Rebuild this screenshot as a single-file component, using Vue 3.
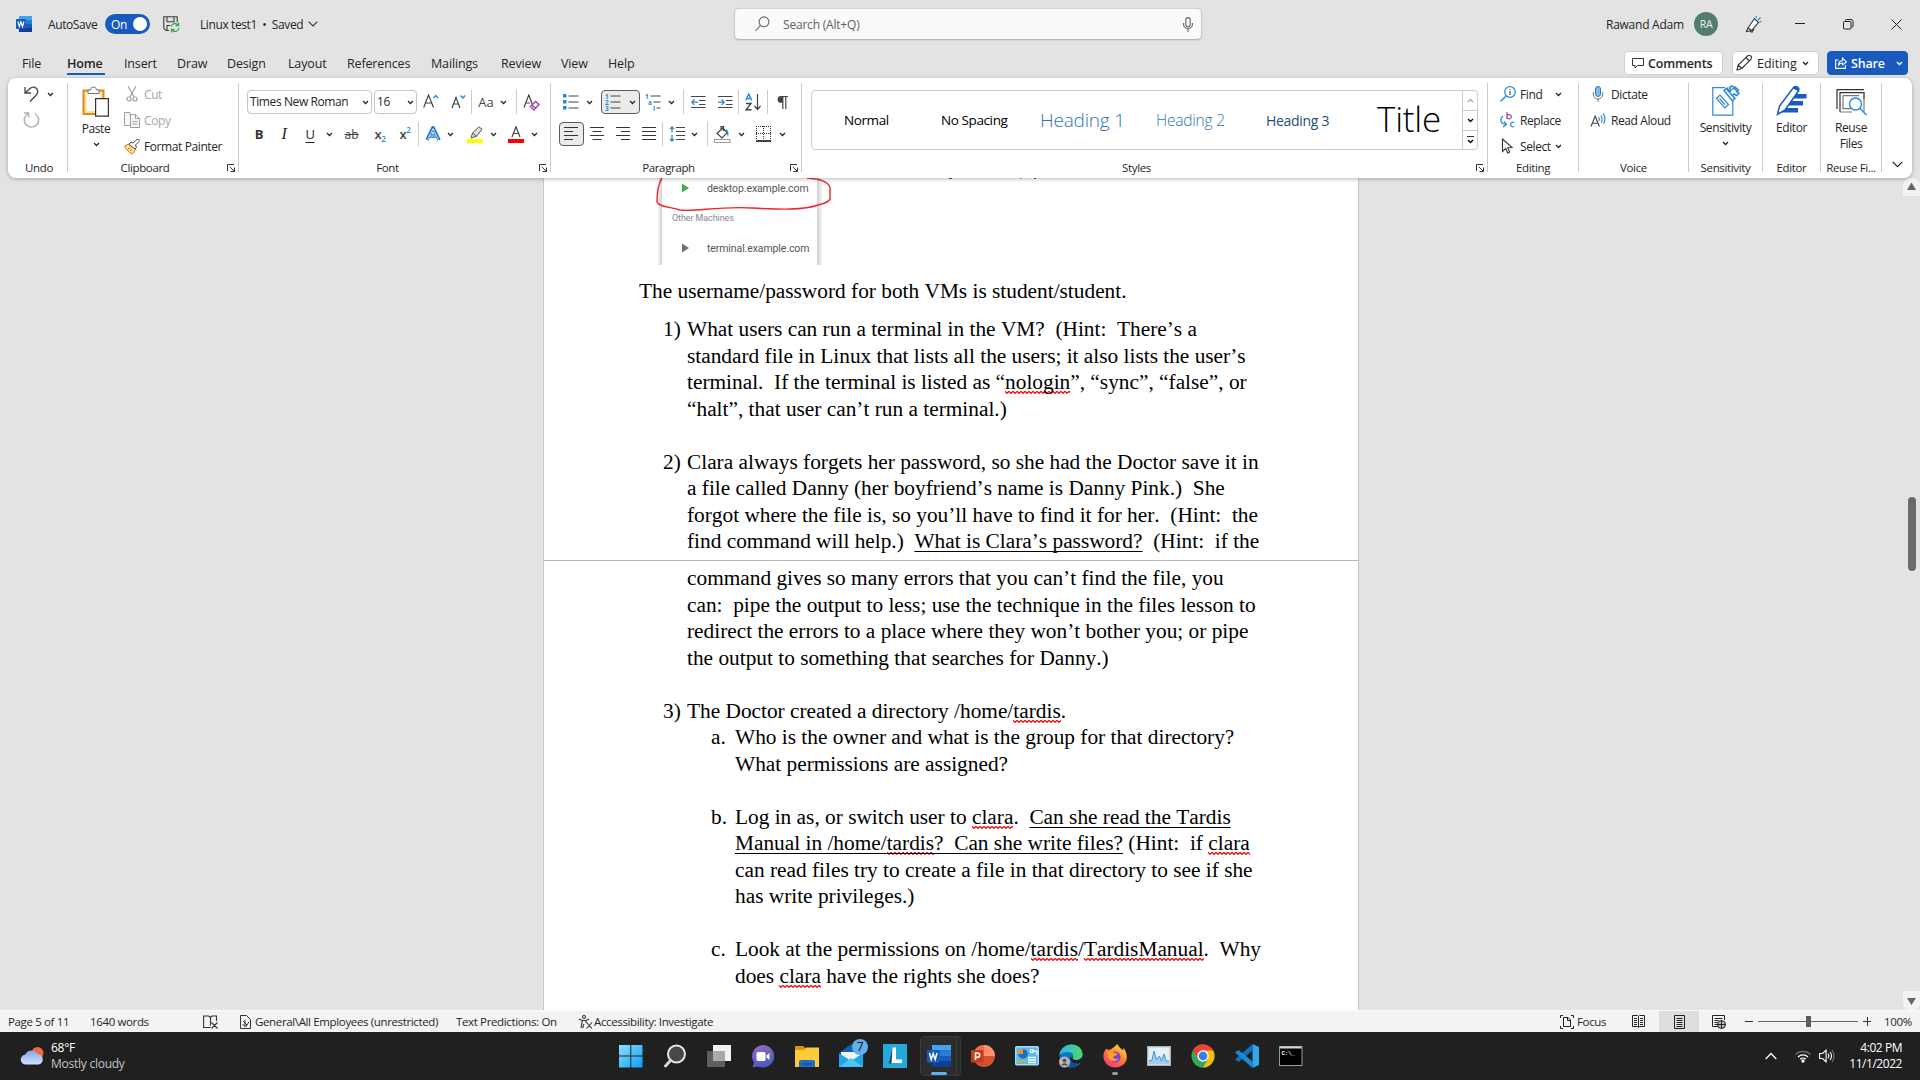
<template>
  <div class="app">
    <header class="titlebar">
      <svg class="word-logo" width="16" height="16" viewBox="0 0 16 16">
        <rect x="3" y="0" width="13" height="4" fill="#41a5ee" />
        <rect x="3" y="4" width="13" height="4" fill="#2b7cd3" />
        <rect x="3" y="8" width="13" height="4" fill="#185abd" />
        <rect x="3" y="12" width="13" height="4" fill="#103f91" />
        <rect x="0" y="3" width="10" height="10" rx="1" fill="#185abd" />
        <path d="M2 5.5l1.3 5 1.6-4.6 1.6 4.6 1.4-5" fill="none" stroke="#fff" stroke-width="1.2" />
      </svg>
      <span class="autosave">AutoSave</span>
      <div class="toggle"><span>On</span><i></i></div>
      <svg class="save-icon" width="17" height="17" viewBox="0 0 17 17" fill="none" stroke="#3b3b3b" stroke-width="1.1">
        <path d="M6 14.5H3L.8 12.300V.8h13.400V6M4 .8v5h7v-5M4 14V9.500h3" />
        <path d="M8 10.500a4 4 0 0 1 7-1.500M15.500 6.500v3h-3M16 12a4 4 0 0 1-7 2M8.500 16.500v-3h3" stroke="#3aa655" stroke-width="1.300" />
      </svg>
      <span class="doc-name">Linux test1 &nbsp;•&nbsp; Saved</span>
      <svg class="name-chev" width="10" height="6" viewBox="0 0 10 6"><path d="M.7.700L5 5 9.300.700" fill="none" stroke="#333" stroke-width="1.100" /></svg>

      <div class="search">
        <svg width="15" height="16" viewBox="0 0 15 16" fill="none" stroke="#666" stroke-width="1.100"><circle cx="9" cy="5.800" r="4.900" /><path d="M5.500 9.300L.5 15" /></svg>
        <span>Search (Alt+Q)</span>
        <svg class="mic" width="10" height="15" viewBox="0 0 10 15" fill="none" stroke="#666" stroke-width="1.100"><rect x="2.800" y=".6" width="4.400" height="9" rx="2.200" /><path d="M.6 6v1.500a4.400 4 0 0 0 8.800 0V6M5 11.600V15" /></svg>
      </div>

      <div class="account">
        <span class="user">Rawand Adam</span>
        <span class="avatar">RA</span>
        <svg class="pen-win" width="17" height="17" viewBox="0 0 17 17" fill="none" stroke="#333" stroke-width="1.100">
          <path d="M1.500 15.500L3 12 9.500 2.500l4 4-7 8zM4.500 14.800l2.500 1.400 2-3.200" fill="#fff" />
          <path d="M3.200 11.800l3.300 2.700" />
          <path d="M10.800 2l.8-1.800M13 4l2.500-2.500M14.300 6l2.300-.7" stroke="#2b88d8" />
        </svg>
        <svg class="win-min" width="10" height="10" viewBox="0 0 10 10"><path d="M0 4.500h10" stroke="#222" /></svg>
        <svg class="win-max" width="11" height="11" viewBox="0 0 11 11" fill="none" stroke="#222"><rect x=".5" y="2.500" width="7.500" height="7.500" rx="1" /><path d="M2.500 2V1.500a1 1 0 0 1 1-1H8A2 2 0 0 1 10 2.500V7a1 1 0 0 1-1 1H8.500" /></svg>
        <svg class="win-close" width="11" height="11" viewBox="0 0 11 11"><path d="M.5.500l10 10M10.500.500l-10 10" stroke="#222" /></svg>
      </div>
    </header>

    <nav class="tabs">
      <span v-for="tab in tabs" :key="tab" class="tab" :class="['tab-' + tab.toLowerCase(), { active: tab === 'Home' }]">{{ tab }}</span>
      <div class="tab-actions">
        <div class="pill comments">
          <svg width="12" height="11" viewBox="0 0 12 11" fill="none" stroke="#333"><path d="M.5.500h11v7H5.500L3 10V7.500H.5z" /></svg>
          <span>Comments</span>
        </div>
        <div class="pill editing">
          <svg width="16" height="16" viewBox="0 0 16 16" fill="none" stroke="#333" stroke-width="1.100"><path d="M1 15l1.200-5L11.500 1a2 2 0 0 1 3.300 3.300L5.800 13.500zM10 2.500l3.500 3.500M2.200 10l3.600 3.500" /></svg>
          <span>Editing</span>
          <Chev />
        </div>
        <div class="pill share">
          <svg width="12" height="12" viewBox="0 0 12 12" fill="none" stroke="#fff" stroke-width="1.100"><path d="M3.500 3H.6v8.400h9.800V8M3.500 8c0-3 1.500-4.300 4-4.300V1.200L11.400 5 7.500 8V6C5.500 6 4.500 6.500 3.500 8z" /></svg>
          <span>Share</span>
          <Chev />
        </div>
      </div>
    </nav>

    <section class="ribbon">
      <div class="group g-undo">
        <div class="undo-row">
          <svg width="16" height="17" viewBox="0 0 16 17" fill="none" stroke="#444" stroke-width="1.300"><path d="M1 1v6h6M1.200 6.800L6 2.500c3-2.600 7-1 7.600 2 .5 2-.3 3.700-2 5.300L6 15.500" /></svg>
          <Chev />
        </div>
        <svg class="redo" width="17" height="17" viewBox="0 0 17 17" fill="none" stroke="#b0b0b0" stroke-width="1.400"><path d="M1 1h4.500v4.500M5.200 1.500a7.200 7.200 0 1 0 6.500 0" /></svg>
        <div class="label">Undo</div>
      </div>

      <div class="group g-clip">
        <div class="clip-body">
          <div class="big-btn paste">
            <svg width="28" height="31" viewBox="0 0 28 31" fill="none">
              <path d="M1.500 4.500h20v23.500h-20z" fill="#fbdf9a" stroke="#e08a1e" stroke-width="2" />
              <path d="M4.500 7h14v18h-14z" fill="#fafafa" />
              <path d="M6 7.500V4h2.500a3 3 0 0 1 6 0H17v3.500z" fill="#fff" stroke="#777" />
              <path d="M13.600 12.600h12.800v17.500H13.600z" fill="#fff" stroke="#333" stroke-width="1.200" />
            </svg>
            <span>Paste</span>
            <Chev />
          </div>
          <div class="clip-list">
            <div class="row-item dim">
              <svg width="16" height="16" viewBox="0 0 16 16" fill="none" stroke="#a0a0a0" stroke-width="1.200"><path d="M4 0l6 11M12 0L6 11" /><circle cx="5" cy="13" r="2" /><circle cx="11" cy="13" r="2" /></svg>
              <span>Cut</span>
            </div>
            <div class="row-item dim">
              <svg width="16" height="16" viewBox="0 0 16 16" fill="#f6f6f6" stroke="#a0a0a0"><path d="M6 3.500V.5H.5v13H6" /><path d="M6.500 2.500h5l4 4v9h-9zM11.500 2.500v4h4M8.500 9.500h5M8.500 12h5" /></svg>
              <span>Copy</span>
            </div>
            <div class="row-item">
              <svg width="16" height="15" viewBox="0 0 16 15"><path d="M.6 7L6 4.500l6 5.500-3 4.500c-2 0-3-.5-3.500-1.500-2-1-3.500-3-4.900-6z" fill="#fbdf9a" stroke="#e0741e" /><path d="M5 5.500l2-2.500 2 1 4-3.500c2-1 3 .5 2 2L11.500 6l1 2.500-1.500 1.500z" fill="#fff" stroke="#444" /><path d="M4 10l2-1M6 12l2-2" stroke="#e0741e" /></svg>
              <span>Format Painter</span>
            </div>
          </div>
        </div>
        <div class="label">Clipboard</div>
        <Launcher />
      </div>

      <div class="group g-font">
        <div class="tool-row first">
          <div class="combo font-name"><span>Times New Roman</span><Chev /></div>
          <div class="combo font-size"><span>16</span><Chev /></div>
          <div class="cell w28">
            <svg width="16" height="16" viewBox="0 0 16 16" fill="none" stroke="#444" stroke-width="1.200"><path d="M.7 13.500L5.500 1l5 12.500M2.500 9h6" /><path d="M10.500 4L12.800 1.500l2.300 2.500" stroke="#2b88d8" stroke-width="1.400" /></svg>
          </div>
          <div class="cell w26">
            <svg width="15" height="16" viewBox="0 0 15 16" fill="none" stroke="#444" stroke-width="1.200"><path d="M1 14L5 3.500 9 14M2.500 10h5" /><path d="M9.500 1.500L11.800 4l2.300-2.500" stroke="#2b88d8" stroke-width="1.400" /></svg>
          </div>
          <i class="sep"></i>
          <div class="cell w28 case">Aa</div>
          <Chev class="gap-r10" />
          <i class="sep"></i>
          <div class="cell w28">
            <svg width="17" height="17" viewBox="0 0 17 17" fill="none" stroke="#444" stroke-width="1.200"><path d="M1 13.500L5.800 1l4 10.500M2.800 9H7" /><path d="M7.500 12.500l5-5 3.500 3-5 5.500zM9 11l3.500 3.500" stroke="#a33fb5" stroke-width="1.400" /></svg>
          </div>
        </div>
        <div class="tool-row">
          <div class="cell w24 bold">B</div>
          <div class="cell w26 ital">I</div>
          <div class="cell w26 under">U</div>
          <div class="cell w12"><Chev /></div>
          <div class="cell w33 strike">ab</div>
          <div class="cell w24 script">x<sub>2</sub></div>
          <div class="cell w26 script">x<sup>2</sup></div>
          <i class="sep"></i>
          <div class="cell w28">
            <svg width="16" height="16" viewBox="0 0 16 16" fill="none" stroke-linejoin="round"><path d="M2 14L8 1.500 14 14M4.500 10h7" stroke="#8cc5f2" stroke-width="4" /><path d="M2 14L8 1.500 14 14M4.500 10h7" stroke="#1b6ec2" stroke-width="2.800" /><path d="M2.500 14L8 2.500 13.500 14M4.500 10h7" stroke="#fff" stroke-width=".8" /></svg>
          </div>
          <Chev class="gap-r7" />
          <div class="cell w30">
            <svg width="17" height="17" viewBox="0 0 17 17"><path d="M4 12l1.500-5L12 .8l3 2.500-5.500 7-5.500 1.700zM5.500 7l4 3.300" fill="#ddd" stroke="#555" /><rect y="13" width="16" height="4" fill="#ff0" /></svg>
          </div>
          <Chev class="gap-r5" />
          <div class="cell w30">
            <svg width="16" height="17" viewBox="0 0 16 17"><path d="M4 11L8 .8 12 11M5.300 7.500h5.400" fill="none" stroke="#444" stroke-width="1.200" /><rect y="13" width="16" height="4" fill="red" /></svg>
          </div>
          <Chev />
        </div>
        <div class="label">Font</div>
        <Launcher />
      </div>

      <div class="group g-para">
        <div class="tool-row first">
          <div class="cell w24">
            <svg width="16" height="16" viewBox="0 0 16 16"><path d="M0 0h3.500v3.500H0zM0 6h3.500v3.500H0zM0 12h3.500v3.500H0z" fill="#2b88d8" /><path d="M5.500 2h10M5.500 8h10M5.500 14h10" stroke="#444" /></svg>
          </div>
          <Chev class="bul-chev" />
          <div class="cell numbered on">
            <svg width="16" height="18" viewBox="0 0 16 18"><path d="M5.500 3h10M5.500 9h10M5.500 15h10" stroke="#444" /><text x="0" y="5.500">1</text><text x="0" y="11.500">2</text><text x="0" y="17.500">3</text></svg>
            <Chev />
          </div>
          <div class="cell w26">
            <svg width="16" height="18" viewBox="0 0 16 18"><path d="M5.500 3h10M8.500 9h7M11.500 15h4" stroke="#444" /><text x="0" y="5.500">1</text><text x="3" y="11.500">a</text><text x="8" y="17.500">i</text></svg>
          </div>
          <Chev class="multi-chev" />
          <i class="sep"></i>
          <div class="cell w28">
            <svg width="15" height="14" viewBox="0 0 15 14" fill="none"><path d="M0 1.500h14.500M8 5.500h6.500M8 9.500h6.500M0 12.500h14.500" stroke="#444" /><path d="M7 7.200H1M3.500 4.500L.8 7.200l2.700 2.700" stroke="#2b88d8" stroke-width="1.300" /></svg>
          </div>
          <div class="cell w26">
            <svg width="15" height="14" viewBox="0 0 15 14" fill="none"><path d="M0 1.500h14.500M8 5.500h6.500M8 9.500h6.500M0 12.500h14.500" stroke="#444" /><path d="M0 7.200h6M3.500 4.500l2.700 2.700-2.700 2.700" stroke="#2b88d8" stroke-width="1.300" /></svg>
          </div>
          <i class="sep"></i>
          <div class="cell w28">
            <svg width="17" height="18" viewBox="0 0 17 18" fill="none" stroke-width="1.400"><path d="M.8 7.500L3.700.800l3 6.700M1.800 5.500h4" stroke="#2b88d8" /><path d="M1 10.500h5L1 16.800h5.500" stroke="#444" /><path d="M12.500 1v15M9.500 13l3 3.500 3-3.500" stroke="#444" stroke-width="1.200" /></svg>
          </div>
          <i class="sep"></i>
          <div class="cell w28">
            <svg width="11" height="13" viewBox="0 0 11 13"><path d="M5.500.500H11M5.800 0v13M8.800 0v13" stroke="#444" stroke-width="1.200" /><path d="M6 0H4a3.300 3.300 0 0 0 0 6.800h2z" fill="#444" /></svg>
          </div>
        </div>
        <div class="tool-row">
          <div class="cell w25 on left-btn"><svg width="15" height="14" viewBox="0 0 15 14"><path d="M0 .5h14M0 4.500h9M0 8.500h14M0 12.500h9" stroke="#333" /></svg></div>
          <div class="cell w26"><svg width="15" height="14" viewBox="0 0 15 14"><path d="M0 .5h14M2.500 4.500h9M0 8.500h14M2.500 12.500h9" stroke="#333" /></svg></div>
          <div class="cell w26"><svg width="15" height="14" viewBox="0 0 15 14"><path d="M0 .5h14M5 4.500h9M0 8.500h14M5 12.500h9" stroke="#333" /></svg></div>
          <div class="cell w26"><svg width="15" height="14" viewBox="0 0 15 14"><path d="M0 .5h14M0 4.500h14M0 8.500h14M0 12.500h14" stroke="#333" /></svg></div>
          <i class="sep"></i>
          <div class="cell w28"><svg width="17" height="16" viewBox="0 0 17 16" fill="none"><path d="M7 1.500h9M7 5.500h9M7 9.500h9M7 13.500h9" stroke="#444" /><path d="M3 1v5.500M1 3l2-2 2 2M3 9v6M1 13l2 2 2-2" stroke="#2b88d8" stroke-width="1.300" /></svg></div>
          <Chev class="gap-r10" />
          <i class="sep"></i>
          <div class="cell w28"><svg width="17" height="17" viewBox="0 0 17 17" fill="none"><path d="M3 7.500l6-5.500 4 5-5 5zM7 4V.6h2.500V5" stroke="#444" stroke-width="1.200" /><path d="M11.500 3c3 1 3.500 4 2.500 8l-1.500-4.500z" fill="#2b88d8" /><rect x=".5" y="13.500" width="15.500" height="3" fill="#fff" stroke="#999" /></svg></div>
          <Chev class="shade-chev" />
          <div class="cell w28"><svg width="15" height="16" viewBox="0 0 15 16"><path d="M.5 0v14M14.500 0v14M7.500 0v14M0 .5h15M0 7.500h15" stroke="#333" stroke-dasharray="1 1" /><path d="M0 15h15" stroke="#000" stroke-width="1.500" /></svg></div>
          <Chev class="border-chev" />
        </div>
        <div class="label">Paragraph</div>
        <Launcher />
      </div>

      <div class="group g-styles">
        <div class="gallery">
          <span class="s-normal">Normal</span>
          <span class="s-nospace">No Spacing</span>
          <span class="s-h1">Heading 1</span>
          <span class="s-h2">Heading 2</span>
          <span class="s-h3">Heading 3</span>
          <span class="s-title">Title</span>
          <div class="gal-scroll">
            <div class="gs-cell up"><Chev /></div>
            <div class="gs-cell"><Chev /></div>
            <div class="gs-cell more"><i></i><Chev /></div>
          </div>
        </div>
        <div class="label">Styles</div>
        <Launcher />
      </div>

      <div class="group g-edit">
        <div class="list">
          <div class="row-item">
            <svg width="16" height="16" viewBox="0 0 16 16" fill="none"><circle cx="10" cy="6" r="5.300" stroke="#2b88d8" stroke-width="1.200" /><path d="M6.300 9.700L.5 15.500" stroke="#2b88d8" stroke-width="1.400" /><path d="M10 5v4M10 3v1.200" stroke="#333" /></svg>
            <span class="find-text">Find</span><Chev />
          </div>
          <div class="row-item">
            <svg width="16" height="16" viewBox="0 0 16 16" fill="none" stroke-width="1.200"><path d="M7 0v7M7 4.500a2.200 2.200 0 1 1 0 .5" stroke="#a33fb5" /><path d="M14 10.500a2.300 2.300 0 1 0 0 4" stroke="#2b88d8" /><path d="M3 4C-.5 7 .5 12 5.500 12.500M4 9.500l2.500 3-3.500 2.500" stroke="#2b88d8" /></svg>
            <span>Replace</span>
          </div>
          <div class="row-item">
            <svg width="16" height="16" viewBox="0 0 16 16" fill="#fff" stroke="#333" stroke-width="1.100"><path d="M2.500 1v12.500l3.200-3 2 4.500 2-1-2-4.300 4.300-.2z" /></svg>
            <span class="select-text">Select</span><Chev />
          </div>
        </div>
        <div class="label">Editing</div>
      </div>

      <div class="group g-voice">
        <div class="list">
          <div class="row-item">
            <svg width="16" height="16" viewBox="0 0 16 16" fill="none"><rect x="5.500" y=".5" width="5" height="10" rx="2.500" fill="#83bdec" stroke="#2b78c2" /><path d="M3.300 6v2.500a4.700 4.500 0 0 0 9.400 0V6M8 13v3" stroke="#777" /></svg>
            <span>Dictate</span>
          </div>
          <div class="row-item">
            <svg width="17" height="16" viewBox="0 0 17 16" fill="none" stroke-width="1.200"><path d="M1 15L5.500 4 10 15M2.500 11.500h6" stroke="#444" /><path d="M9 5q1.500 2 .5 4M11.500 3q2.500 3.500.5 8M14 1q3.500 5.500.5 11" stroke="#2b88d8" /></svg>
            <span>Read Aloud</span>
          </div>
        </div>
        <div class="label">Voice</div>
      </div>

      <div class="group g-sens">
        <div class="big-btn">
          <svg width="28" height="31" viewBox="0 0 28 31" fill="none" stroke="#2b88d8" stroke-width="1.200">
            <path d="M13 2.600H.8v27.500h20V16" />
            <path d="M4.500 13.500l3.500-3.500 8.500 9.500-3.500 3.500zM7.500 13.500l5.500 6.200" />
            <path d="M12 5.500L15 3l3 3.500 1-1-1.500-3L20 .8l7 7.500-2.500 2.200-2.500-1.500-1.500 1.500 2.500 3-2.500 2.500zM14.500 4l7.500 8.500M20 4.500L23 2l3.500 3-2.500 2.500" stroke-width="1.500" />
          </svg>
          <span>Sensitivity</span>
          <Chev />
        </div>
        <div class="label">Sensitivity</div>
      </div>

      <div class="group g-editor">
        <div class="big-btn">
          <svg width="32" height="31" viewBox="0 0 32 31"><path d="M15 9h15.500v4.500H12zM11 16h16v4.500H8zM9 23h13v4.500H5z" fill="#185abd" /><path d="M1.500 29.500L3.500 21 17.500 2.500c2.500-2.500 6.500.5 5 3.500L9 25z" fill="#fff" stroke="#185abd" stroke-width="1.500" /><path d="M16.500 3.500c2-3.500 8-.5 6 3l-6-3.500z" fill="#185abd" /></svg>
          <span>Editor</span>
        </div>
        <div class="label">Editor</div>
      </div>

      <div class="group g-reuse">
        <div class="big-btn">
          <svg width="31" height="31" viewBox="0 0 31 31" fill="none" stroke="#333" stroke-width="1.200"><path d="M1 24V4.600h27M4 27V7.600h24V14" /><path d="M7 10.600h16M7 10.600v13h8M4 27h12M28 7.600v19" stroke="#777" /><circle cx="19.500" cy="19" r="6" fill="#fff" stroke="#2b88d8" stroke-width="1.400" /><path d="M24 23.500l6.500 6.500" stroke="#2b88d8" stroke-width="1.500" /></svg>
          <span>Reuse</span>
          <span class="second">Files</span>
        </div>
        <div class="label">Reuse Fi...</div>
      </div>

      <svg class="collapse" width="11" height="7" viewBox="0 0 11 7"><path d="M.7.800l4.800 4.800L10.300.800" fill="none" stroke="#222" stroke-width="1.200" /></svg>
    </section>

    <main class="workspace">
      <article class="page">
        <svg class="machines" width="430" height="87" viewBox="0 0 430 87">
          <defs>
            <linearGradient id="shL"><stop offset="0" stop-color="#fff" /><stop offset="1" stop-color="#cfcfcf" /></linearGradient>
            <linearGradient id="shR"><stop offset="0" stop-color="#cfcfcf" /><stop offset="1" stop-color="#fff" /></linearGradient>
          </defs>
          <rect x="17" y="0" width="5" height="87" fill="url(#shL)" />
          <rect x="177" y="0" width="6" height="87" fill="url(#shR)" />
          <path d="M42 5.500v9l7-4.500z" fill="#3fae49" />
          <path d="M42 65.500v9l7-4.500z" fill="#707070" />
          <text x="67" y="13.500">desktop.example.com</text>
          <text class="muted" x="32" y="43">Other Machines</text>
          <text x="67" y="73.500">terminal.example.com</text>
          <path d="M22 0C18 6 17 16 17 24c2 5 14 5 23 8 16 2 38-4 72-2 22 1 50 3 66-3 7-2 11-3 12-6V10c-1-6-8-9-23-10" fill="none" stroke="#f0252b" stroke-width="1.400" />
          <path d="M309 .5h3M381 0l-.5 1M396 .5h-2" stroke="#555" />
        </svg>
        <p class="intro">The username/password for both VMs is student/student.</p>
        <div class="doc-lines first-lines">
          <DocLine v-for="(line, i) in pageOne" :key="i" :line="line" />
        </div>
        <hr />
        <div class="doc-lines">
          <DocLine v-for="(line, i) in pageTwo" :key="i" :line="line" />
        </div>
      </article>
      <div class="scrollbar">
        <svg class="arrow top" width="17" height="18" viewBox="0 0 17 18"><path d="M8.500 4.500L13 12H4z" fill="#666" /></svg>
        <div class="thumb"></div>
        <svg class="arrow bottom" width="17" height="19" viewBox="0 0 17 19"><path d="M8.500 14L13 7H4z" fill="#666" /></svg>
      </div>
    </main>

    <footer class="status">
      <span class="st-page">Page 5 of 11</span>
      <span class="st-words">1640 words</span>
      <svg class="st-proof" width="15" height="14" viewBox="0 0 15 14" fill="none" stroke="#333" stroke-width="1.100"><path d="M7.500 12.500H.6V1h5L7.500 2.500 9 1h4.500v5M7.500 2.500v8M8.500 7.500l6 6M14.500 7.500l-6 6" /></svg>
      <svg class="st-label" width="11" height="14" viewBox="0 0 11 14" fill="none" stroke="#333"><path d="M.5.500h6l4 4v9H.5zM2.500 9l3 3L9 7M3 6l4 4M5 5v6" /></svg>
      <span class="st-general">General\All Employees (unrestricted)</span>
      <span class="st-pred">Text Predictions: On</span>
      <svg class="st-acc" width="15" height="14" viewBox="0 0 15 14" fill="none" stroke="#333" stroke-width="1.100"><circle cx="6" cy="2" r="1.500" /><path d="M.8 4l3.500 1.500L3 13M11 4L7.800 5.500l.5 2M4.300 5.500h3.500M4.500 13L6 9M8.500 7.500l5.500 6M14 7.500L8.500 13.500" /></svg>
      <span class="st-access">Accessibility: Investigate</span>
      <div class="st-right">
        <svg width="14" height="14" viewBox="0 0 14 14" fill="none" stroke="#222"><path d="M3 .5H.5V3M11 .5h2.500V3M.5 11v2.500H3M13.500 11v2.500H11M3.500 2.500H8L10.500 5v6.500h-7zM7.500 2.500v3h3" /></svg>
        <span class="st-focus">Focus</span>
        <svg class="view-read" width="13" height="13" viewBox="0 0 13 13" fill="none" stroke="#222"><path d="M6.500 2v10.500M.5.500h5l1 1 1-1h5v11h-5l-1 1-1-1h-5zM2 3.500h3M2 5.500h3M2 7.500h3M2 9.500h3M8 3.500h3M8 5.500h3M8 7.500h3M8 9.500h3" /></svg>
        <div class="view-print"><svg width="11" height="14" viewBox="0 0 11 14" fill="none" stroke="#222"><path d="M.5.500h10v13H.5zM2.500 3.500h6M2.500 5.500h6M2.500 7.500h6M2.500 9.500h6M2.500 11.500h6" /></svg></div>
        <svg class="view-web" width="14" height="14" viewBox="0 0 14 14" fill="none" stroke="#222"><path d="M6 11.500H.5V.5h12V5M2.500 3.500h8M2.500 5.500h4M2.500 7.500h3M2.500 9.500h3" /><circle cx="9.500" cy="9.500" r="4" fill="#bbb" /><path d="M5.500 9.500h8M9.500 5.500v8" /></svg>
        <span class="zoom-sign minus"></span>
        <div class="slider"><i></i></div>
        <span class="zoom-sign plus"></span>
        <span class="st-zoom">100%</span>
      </div>
    </footer>

    <div class="taskbar">
      <svg class="weather" width="25" height="18" viewBox="0 0 25 18">
        <defs><linearGradient id="cloud" x1="0" y1="0" x2="0" y2="1"><stop offset="0" stop-color="#7fa8ea" /><stop offset="1" stop-color="#d3e2fb" /></linearGradient></defs>
        <circle cx="17.500" cy="6" r="6" fill="#f4673a" />
        <path d="M6 17.500a5 5 0 0 1-.5-10A6.500 6 0 0 1 17.500 7a5.300 5.300 0 0 1 1 10.500z" fill="url(#cloud)" />
      </svg>
      <div class="weather-text"><span>68°F</span><span class="cond">Mostly cloudy</span></div>

      <div class="apps">
        <div class="app-cell">
          <svg width="24" height="24" viewBox="0 0 24 24"><defs><linearGradient id="win" x2="1" y2="1"><stop offset="0" stop-color="#8ae2fc" /><stop offset="1" stop-color="#0c9bfb" /></linearGradient></defs><path d="M0 1h11.300v10.500H0zM12.300 1H23.500v10.500H12.300zM0 12.500h11.300V23.500H0zM12.300 12.500H23.500V23.500H12.300z" fill="url(#win)" /></svg>
        </div>
        <div class="app-cell">
          <svg width="24" height="24" viewBox="0 0 24 24"><circle cx="13.500" cy="10" r="8.500" fill="#484848" stroke="#e6e6e6" stroke-width="2" /><path d="M7.500 16.500L2.500 22" stroke="#d8d8d8" stroke-width="3" stroke-linecap="round" /></svg>
        </div>
        <div class="app-cell">
          <svg width="24" height="24" viewBox="0 0 24 24"><rect y="7" width="18" height="16" fill="#5f5f5f" /><rect x="6" y="1" width="18" height="16" fill="#f2f2f2" /><rect x="6" y="7" width="12" height="10" fill="#a9a9a9" /></svg>
        </div>
        <div class="app-cell">
          <svg width="24" height="24" viewBox="0 0 24 24"><defs><linearGradient id="chat" y2="1" x2=".3"><stop offset="0" stop-color="#9a6bb8" /><stop offset="1" stop-color="#4a5bc9" /></linearGradient></defs><path d="M12 1a11.300 11.300 0 1 1-5 21.500L1.500 23.500 3 18.500A11.300 11.300 0 0 1 12 1z" fill="url(#chat)" /><rect x="5.500" y="8" width="9" height="9" rx="1.500" fill="#fff" /><path d="M15.500 11.500l3-2.500v7l-3-2.500z" fill="#fff" /></svg>
        </div>
        <div class="app-cell">
          <svg width="24" height="24" viewBox="0 0 24 24"><path d="M0 2h8.500l2 3H24v7H0z" fill="#d9940b" /><path d="M0 6h9l2-2.500h13V23H0z" fill="#fccb3c" /><path d="M4 23v-5a2 2 0 0 1 2-2h12a2 2 0 0 1 2 2v5z" fill="#1a6fc0" /><path d="M7 20h10" stroke="#114f94" stroke-width="1.500" /></svg>
        </div>
        <div class="app-cell">
          <svg width="24" height="24" viewBox="0 0 24 24"><path d="M0 9L12 0l12 9z" fill="#1160b0" /><path d="M2 8h20v8H2z" fill="#f3f3f3" /><path d="M0 9l12 8 12-8v14H0z" fill="#1fa6ea" /><path d="M0 23l12-9 12 9z" fill="#4cc2f5" /></svg>
          <span class="mail-badge">7</span>
        </div>
        <div class="app-cell">
          <svg width="24" height="24" viewBox="0 0 24 24"><rect width="24" height="24" fill="#25a9da" /><path d="M9.500 3.500L6 20l5-2z" fill="#0d3c66" /><path d="M9.500 3.500h3.500v12h6V19H8.500z" fill="#fff" /></svg>
        </div>
        <div class="app-cell">
          <div class="active-app"></div>
          <svg width="24" height="24" viewBox="0 0 24 24"><path d="M5 1h19v5.500H5z" fill="#41a5ee" /><path d="M5 6.500h19V12H5z" fill="#2b7cd3" /><path d="M5 12h19v5.500H5z" fill="#185abd" /><path d="M5 17.500h19V23H5z" fill="#103f91" /><rect y="6" width="12.500" height="12.500" rx="1" fill="#185abd" /><path d="M2.500 9l1.700 6.500 2-6 2 6L10 9" fill="none" stroke="#fff" stroke-width="1.500" /></svg>
          <i class="running"></i>
        </div>
        <div class="app-cell">
          <svg width="24" height="24" viewBox="0 0 24 24"><circle cx="13" cy="12" r="11" fill="#d35230" /><path d="M13 1a11 11 0 0 1 11 11H13z" fill="#ff8f6b" /><path d="M13 1v11H2A11 11 0 0 1 13 1z" fill="#ed6c47" /><rect y="6" width="12.500" height="12.500" rx="1" fill="#c43e1c" /><path d="M4.500 16V9h2a2 2 0 0 1 0 4.300h-2" fill="none" stroke="#fff" stroke-width="1.600" /></svg>
        </div>
        <div class="app-cell">
          <svg width="24" height="20" viewBox="0 0 24 20"><rect x=".7" y=".7" width="22.600" height="18" rx="1" fill="#55b8ee" stroke="#a6dcf8" stroke-width="1.400" /><circle cx="8" cy="8" r="5" fill="#f4f9fd" /><path d="M8 8V3a5 5 0 1 1-5 5z" fill="#1671c2" /><path d="M8 8V3a5 5 0 0 0-5 5z" fill="#f08a24" /><path d="M15.500 3.500h2.500v3h-2.500zM19 6a1.800 1.800 0 1 1 2 2.500" fill="none" stroke="#fff" stroke-width="1.200" /><path d="M3 15.500h8" stroke="#f5a623" stroke-width="2" /><path d="M13 11.500h8M13 14h8M13 16.500h8" stroke="#fff" stroke-width="1.400" /></svg>
        </div>
        <div class="app-cell">
          <svg width="24" height="24" viewBox="0 0 24 24"><defs><linearGradient id="edge"><stop offset="0" stop-color="#29b6e8" /><stop offset="1" stop-color="#53d769" /></linearGradient></defs><circle cx="12" cy="12" r="11.500" fill="#1272c4" /><path d="M.5 11C1.500 4 7 .5 12.500.500c7 0 11 5 11 9.500 0 4-3 6-6.500 6-3 0-4-1.500-3-3 1-2-.5-5-5-5-4 0-7 1.500-8.500 3z" fill="url(#edge)" /><path d="M9 12c-1 4 3 8.500 8 7.500 3-.5 5-1.500 5.500-2.500C20 20 15 24 11 23z" fill="#0d4f93" /><path d="M14 12.500c-1 2 0 3.500 3 3.500s6-1.500 6.500-4L24 18l-6 1.500c-3 .5-7-2-7-5.500z" fill="#202020" /><circle cx="5.500" cy="18" r="5.500" fill="#b9b9b9" /><circle cx="5.500" cy="16.500" r="2" fill="#555" /><path d="M2 21.500c1-3 6-3 7 0z" fill="#555" /></svg>
        </div>
        <div class="app-cell">
          <svg width="24" height="24" viewBox="0 0 24 24"><defs><linearGradient id="fox" x1=".8" y1="0" x2=".2" y2="1"><stop offset="0" stop-color="#ffde3e" /><stop offset=".5" stop-color="#ff7b29" /><stop offset="1" stop-color="#f0308c" /></linearGradient></defs><path d="M14.500 0c1 3 3 4 5 6 2-.5.5-2 1-2.500 4 6 4.500 12 1 16-6 6.500-18 5-20.500-4C-.5 11 1 7 3.500 4.500L5 6c3-.5 5-2 6-3z" fill="url(#fox)" /><circle cx="12" cy="13" r="5.500" fill="#7a42d6" /><path d="M4 8c3-2 6-1 7 1 2 0 3 0 3.500 1.500L10 13c1 2 3 2.500 5.500 1.500-2 4-9 3.500-10.500-1z" fill="#ff9a2b" /></svg>
          <i class="idle-dot"></i>
        </div>
        <div class="app-cell">
          <svg width="24" height="20" viewBox="0 0 24 20"><rect x=".7" y=".7" width="22.600" height="18.600" fill="#e6f0f7" stroke="#a9b5bd" stroke-width="1.400" /><path d="M2 15l3-1 2-9 2.500 9 3-4 2 5 2.500-7 2 7h3v3H2z" fill="#a3cdea" /><path d="M2 15l3-1 2-9 2.500 9 3-4 2 5 2.500-7 2 7h3" fill="none" stroke="#3d94d0" /></svg>
        </div>
        <div class="app-cell">
          <svg width="24" height="24" viewBox="0 0 24 24"><circle cx="12" cy="12" r="11.500" fill="#34a853" /><path d="M12 12L2.050 6.250A11.500 11.500 0 0 1 21.950 6.250z" fill="#ea4335" /><path d="M12 12V6.300h10A11.500 11.500 0 0 1 12 23.500l5-8.500z" fill="#fbbc05" /><path d="M2.050 6.250L7 15l5-3V6.300H22A11.500 11.500 0 0 0 2.050 6.250z" fill="#ea4335" /><circle cx="12" cy="12" r="5.700" fill="#fff" /><circle cx="12" cy="12" r="4.400" fill="#3b7ded" /></svg>
        </div>
        <div class="app-cell">
          <svg width="24" height="24" viewBox="0 0 24 24"><path d="M17.500 0L24 3v18l-6.500 3z" fill="#2fa5ec" /><path d="M17.500 0v6.500L3.500 18 0 15.500z" fill="#0c72bd" /><path d="M17.500 24v-6.500L3.500 6 0 8.500z" fill="#1a8ad6" /></svg>
        </div>
        <div class="app-cell">
          <svg width="24" height="20" viewBox="0 0 24 20"><rect x=".5" y=".5" width="22.500" height="19" fill="#000" stroke="#9a9a9a" /><path d="M1 1.500h21.500" stroke="#d5d5d5" stroke-width="2" /><text class="cmd-text" x="2.500" y="9">C:\_</text></svg>
        </div>
      </div>

      <div class="tray">
        <svg width="12" height="8" viewBox="0 0 12 8"><path d="M.7 7L6 1.500 11.300 7" fill="none" stroke="#fff" stroke-width="1.300" /></svg>
        <svg class="wifi" width="16" height="13" viewBox="0 0 16 13" fill="none" stroke="#fff" stroke-width="1.300"><path d="M.5 4.500a10.500 10.500 0 0 1 15 0" stroke="#777" /><path d="M3 7a7 7 0 0 1 10 0M5.200 9.200a4 4 0 0 1 5.600 0" /><circle cx="8" cy="11" r="1" fill="#fff" /></svg>
        <svg class="sound" width="16" height="14" viewBox="0 0 16 14" fill="none" stroke="#fff" stroke-width="1.100"><path d="M.6 4.500h3l3.500-3.400v11.800L3.600 9.500h-3zM9 4.800q1.500 2.200 0 4.400M11 3q3 4 0 8" /><path d="M13 1q4 6 0 12" stroke="#777" /></svg>
        <div class="clock"><span>4:02 PM</span><span>11/1/2022</span></div>
      </div>
    </div>
  </div>
</template>

<script setup>
import { h } from 'vue'

const tabs = ['File', 'Home', 'Insert', 'Draw', 'Design', 'Layout', 'References', 'Mailings', 'Review', 'View', 'Help']

const Chev = () =>
  h('svg', { class: 'chev', width: 7, height: 5, viewBox: '0 0 7 5' }, [
    h('path', { d: 'M1 1l2.500 2.500L6 1', fill: 'none', stroke: 'currentColor', 'stroke-width': 1.3 }),
  ])

const Launcher = () =>
  h('svg', { class: 'launcher', width: 8, height: 8, viewBox: '0 0 8 8' }, [
    h('path', { d: 'M.5 7V.5H7M2.800 2.800L7 7M7.500 3.500v4h-4', fill: 'none', stroke: '#333' }),
  ])

// u = underlined, s = flagged by the spell checker
const DocLine = ({ line }) =>
  h('div', { class: ['doc-line', line.sub && 'sub'] }, [
    h('span', { class: 'marker' }, line.n || ''),
    h('span', { class: 'doc-text' }, (line.t || []).map((p) =>
      typeof p === 'string' ? p : h('span', { class: { 'doc-u': p.u, 'doc-s': p.s } }, p.t)
    )),
  ])
DocLine.props = ['line']

const pageOne = [
  { n: '1)', t: ['What users can run a terminal in the VM?  (Hint:  There’s a'] },
  { t: ['standard file in Linux that lists all the users; it also lists the user’s'] },
  { t: ['terminal.  If the terminal is listed as “', { t: 'nologin', s: true }, '”, “sync”, “false”, or'] },
  { t: ['“halt”, that user can’t run a terminal.)'] },
  {},
  { n: '2)', t: ['Clara always forgets her password, so she had the Doctor save it in'] },
  { t: ['a file called Danny (her boyfriend’s name is Danny Pink.)  She'] },
  { t: ['forgot where the file is, so you’ll have to find it for her.  (Hint:  the'] },
  { t: ['find command will help.)  ', { t: 'What is Clara’s password?', u: true }, '  (Hint:  if the'] },
]

const pageTwo = [
  { t: ['command gives so many errors that you can’t find the file, you'] },
  { t: ['can:  pipe the output to less; use the technique in the files lesson to'] },
  { t: ['redirect the errors to a place where they won’t bother you; or pipe'] },
  { t: ['the output to something that searches for Danny.)'] },
  {},
  { n: '3)', t: ['The Doctor created a directory /home/', { t: 'tardis', s: true }, '.'] },
  { n: 'a.', sub: true, t: ['Who is the owner and what is the group for that directory?'] },
  { sub: true, t: ['What permissions are assigned?'] },
  {},
  { n: 'b.', sub: true, t: ['Log in as, or switch user to ', { t: 'clara', s: true }, '.  ', { t: 'Can she read the Tardis', u: true }] },
  { sub: true, t: [{ t: 'Manual in /home/', u: true }, { t: 'tardis', u: true, s: true }, { t: '?  Can she write files?', u: true }, ' (Hint:  if ', { t: 'clara', s: true }] },
  { sub: true, t: ['can read files try to create a file in that directory to see if she'] },
  { sub: true, t: ['has write privileges.)'] },
  {},
  { n: 'c.', sub: true, t: ['Look at the permissions on /home/', { t: 'tardis', s: true }, '/', { t: 'TardisManual', s: true }, '.  Why'] },
  { sub: true, t: ['does ', { t: 'clara', s: true }, ' have the rights she does?'] },
]
</script>

<style>
body {
  margin: 0;
  overflow: hidden;
}

.doc-line {
  display: flex;
  height: 26.5px;
  padding-left: 119px;
}

.doc-line.sub {
  padding-left: 167px;
}

.marker {
  width: 24px;
  flex-shrink: 0;
}

.doc-u {
  text-decoration: underline;
  text-decoration-thickness: 1px;
  text-underline-offset: 3px;
  text-decoration-skip-ink: none;
}

.doc-s {
  display: inline-block;
  height: 25px;
  background: url("data:image/svg+xml,%3Csvg xmlns='http://www.w3.org/2000/svg' width='4' height='3'%3E%3Cpath d='M-1 -.5L2 2.300L5 -.5' fill='none' stroke='red' stroke-width='1.300'/%3E%3C/svg%3E") 0 100% repeat-x;
}
</style>

<style scoped>
.app {
  width: 1920px;
  height: 1080px;
  display: flex;
  flex-direction: column;
  background: #e3e3e3;
  font-family: 'Open Sans', 'Noto Sans', sans-serif;
  font-size: 12px;
  letter-spacing: -0.4px;
  color: #262626;
  overflow: hidden;
  white-space: nowrap;
}

svg {
  display: block;
  flex-shrink: 0;
}

.titlebar {
  height: 48px;
  display: flex;
  align-items: center;
  box-sizing: border-box;
  padding-left: 16px;
}

.autosave {
  width: 57px;
  margin-left: 16px;
}

.toggle {
  width: 45px;
  height: 20px;
  border-radius: 10px;
  background: #185abd;
  color: #fff;
  display: flex;
  align-items: center;
  justify-content: space-between;
  box-sizing: border-box;
  padding: 0 3px 0 6px;
  margin-right: 13px;
}

.toggle i {
  width: 14px;
  height: 14px;
  border-radius: 50%;
  background: #fff;
}

.doc-name {
  width: 108px;
  margin-left: 20px;
}

.search {
  display: flex;
  align-items: center;
  width: 466px;
  height: 30px;
  margin-left: 417px;
  border-radius: 4px;
  background: #fafafa;
  box-shadow: 0 0 2px rgba(0, 0, 0, 0.25), 0 1px 2px rgba(0, 0, 0, 0.2);
  color: #616161;
  box-sizing: border-box;
  padding: 0 8px 0 20px;
}

.search span {
  margin-left: 13px;
  letter-spacing: -0.2px;
}

.mic {
  margin-left: auto;
}

.account {
  display: flex;
  align-items: center;
  margin-left: auto;
  padding-right: 18px;
}

.user {
  width: 88px;
  letter-spacing: -0.25px;
}

.avatar {
  width: 24px;
  height: 24px;
  line-height: 24px;
  border-radius: 50%;
  background: #547c71;
  color: #e8f0ee;
  text-align: center;
  font-size: 10.5px;
}

.pen-win {
  margin-left: 27px;
}

.win-min {
  margin-left: 33px;
}

.win-max {
  margin-left: 38px;
}

.win-close {
  margin-left: 37px;
}

.tabs {
  height: 30px;
  display: flex;
  padding-left: 22px;
  font-size: 12.5px;
  letter-spacing: -0.15px;
}

.tab {
  height: 27px;
  line-height: 31px;
  box-sizing: border-box;
}

.tab-file {
  width: 45px;
}

.tab-home {
  width: 38px;
  margin-right: 19px;
}

.tab-insert {
  width: 53px;
}

.tab-draw {
  width: 50px;
}

.tab-design {
  width: 61px;
}

.tab-layout {
  width: 59px;
}

.tab-references {
  width: 84px;
}

.tab-mailings {
  width: 70px;
}

.tab-review {
  width: 60px;
}

.tab-view {
  width: 47px;
}

.tab.active {
  font-weight: 600;
  border-bottom: 2px solid #185abd;
}

.tab-actions {
  display: flex;
  margin: 3px 12px 0 auto;
}

.pill {
  display: flex;
  align-items: center;
  height: 24px;
  box-sizing: border-box;
  border: 1px solid #d0d0d0;
  border-radius: 4px;
  background: #fff;
  font-weight: 600;
}

.comments {
  width: 99px;
  padding-left: 7px;
  gap: 4px;
}

.editing {
  width: 87px;
  margin-left: 9px;
  padding-left: 3px;
  gap: 5px;
  font-weight: 500;
  letter-spacing: 0;
}

.share {
  width: 81px;
  margin-left: 8px;
  padding-left: 7px;
  gap: 4px;
  background: #185abd;
  border-color: #185abd;
  color: #fff;
}

.share .chev {
  margin-left: 7px;
}

.ribbon {
  position: relative;
  z-index: 2;
  display: flex;
  height: 100px;
  box-sizing: border-box;
  padding-top: 5px;
  margin: 0 8px;
  background: #fff;
  border-radius: 8px;
  box-shadow: 0 1px 4px rgba(0, 0, 0, 0.28);
}

.group {
  position: relative;
  display: flex;
  flex-direction: column;
  height: 89px;
  box-sizing: border-box;
  border-right: 1px solid #cbcbcb;
}

.label {
  margin-top: auto;
  height: 17px;
  line-height: 17px;
  font-size: 11.5px;
  letter-spacing: -0.35px;
  text-align: center;
  margin-bottom: -4px;
}

.launcher {
  position: absolute;
  right: 3px;
  bottom: 0;
}

.g-undo {
  width: 60px;
}

.g-undo .label {
  padding-left: 3px;
}

.g-clip {
  width: 171px;
}

.g-clip .label {
  margin-right: 16px;
}

.g-font {
  width: 312px;
  padding-left: 8px;
}

.g-font .label {
  margin-right: 22px;
}

.g-para {
  width: 251px;
  padding-left: 8px;
}

.g-para .label {
  margin-right: 23px;
}

.g-styles {
  width: 686px;
}

.g-styles .label {
  margin-right: 16px;
}

.g-edit {
  width: 91px;
}

.g-voice {
  width: 110px;
}

.g-sens {
  width: 74px;
}

.g-editor {
  width: 58px;
}

.g-reuse {
  width: 61px;
}

.undo-row {
  display: flex;
  align-items: center;
  gap: 7px;
  padding: 3px 0 0 16px;
}

.redo {
  margin: 9px 0 0 15px;
}

.clip-body {
  display: flex;
  height: 70px;
}

.big-btn {
  display: flex;
  flex-direction: column;
  align-items: center;
  padding-top: 2px;
}

.big-btn span {
  height: 16px;
  line-height: 16px;
  margin-top: 4px;
}

.big-btn .second {
  margin-top: 0;
}

.big-btn .chev {
  margin-top: 5px;
}

.paste {
  width: 56px;
  padding: 3px 0 0;
}

.row-item {
  display: flex;
  align-items: center;
  height: 26px;
  gap: 4px;
}

.dim {
  color: #a6a6a6;
}

.list {
  height: 70px;
  padding-left: 12px;
}

.g-voice .list {
  padding-left: 11px;
}

.g-voice .row-item span {
  margin-left: 1px;
}

.g-voice .row-item svg {
  width: 16px;
}

.find-text {
  width: 31px;
}

.clip-list,
.list {
  margin-top: -2px;
}

.tool-row {
  display: flex;
  align-items: center;
  height: 24px;
  margin-top: 8px;
}

.tool-row.first {
  margin-top: 7px;
}

.combo {
  display: flex;
  align-items: center;
  justify-content: space-between;
  height: 24px;
  box-sizing: border-box;
  border: 1px solid #c6c6c6;
  border-radius: 4px;
  padding: 0 2px;
}

.combo span {
  margin-top: -2px;
}

.font-name {
  width: 125px;
  margin-right: 2px;
}

.font-size {
  width: 43px;
}

.cell {
  display: flex;
  align-items: center;
  justify-content: center;
  height: 24px;
  flex-shrink: 0;
  box-sizing: border-box;
}

.w12 { width: 12px; }
.w24 { width: 24px; }
.w25 { width: 25px; }
.w26 { width: 26px; }
.w28 { width: 28px; }
.w30 { width: 30px; }
.w33 { width: 33px; }

.sep {
  width: 1px;
  height: 24px;
  background: #cbcbcb;
}

.gap-r10 { margin-right: 9px; }
.gap-r7 { margin-right: 6px; }
.gap-r5 { margin-right: 4px; }

.case {
  font-size: 13px;
  letter-spacing: 0;
  color: #444;
}

.bold {
  font-weight: 700;
  font-size: 13px;
  color: #333;
}

.ital {
  font-family: 'Liberation Serif', serif;
  font-style: italic;
  font-size: 16px;
}

.under {
  font-size: 13px;
  text-decoration: underline;
  text-underline-offset: 3px;
}

.strike {
  text-decoration: line-through;
  font-size: 12px;
  letter-spacing: 0;
  color: #444;
}

.script {
  font-weight: 600;
  font-size: 13px;
  color: #444;
}

.script sub,
.script sup {
  font-size: 8px;
  color: #2b88d8;
}

.script sub {
  margin-top: 9px;
}

.script sup {
  margin-top: -9px;
}

.bul-chev {
  margin: 0 8px 0 3px;
}

.on {
  border: 1px solid #5c5c5c;
  border-radius: 4px;
  background: #ebebeb;
}

.numbered {
  width: 39px;
  gap: 8px;
}

.cell text {
  font: bold 6.5px 'Open Sans', sans-serif;
  fill: #2b88d8;
}

.multi-chev {
  margin: 0 8px 0 2px;
}

.shade-chev {
  margin: 0 4px 0 2px;
}

.border-chev {
  margin-left: 2px;
}

.gallery {
  display: flex;
  align-items: center;
  width: 667px;
  height: 60px;
  margin: 7px 0 0 9px;
  box-sizing: border-box;
  border: 1px solid #cbcbcb;
  border-radius: 4px;
  font-family: 'Open Sans', sans-serif;
  color: #000;
}

.s-normal {
  width: 97px;
  padding-left: 32px;
  font-size: 13.5px;
}

.s-nospace {
  width: 99px;
  font-size: 13.5px;
}

.s-h1 {
  width: 116px;
  font-size: 19px;
  font-weight: 300;
  letter-spacing: -0.2px;
  color: #2e74b5;
}

.s-h2 {
  width: 110px;
  font-size: 15.5px;
  font-weight: 300;
  letter-spacing: -0.2px;
  color: #2e74b5;
}

.s-h3 {
  width: 111px;
  font-size: 14px;
  letter-spacing: -0.3px;
  color: #1f4d78;
}

.s-title {
  font-size: 35px;
  font-weight: 300;
  letter-spacing: -0.2px;
  margin-top: -3px;
}

.gal-scroll {
  width: 14px;
  height: 58px;
  margin-left: auto;
  border-left: 1px solid #cbcbcb;
}

.gs-cell {
  display: flex;
  flex-direction: column;
  align-items: center;
  justify-content: center;
  height: 19px;
  border-bottom: 1px solid #cbcbcb;
}

.gs-cell.more {
  height: 18px;
  border: none;
}

.gs-cell.more i {
  width: 7px;
  height: 1px;
  background: #333;
  margin-bottom: 2px;
}

.up .chev {
  transform: rotate(180deg);
  color: #aaa;
}

.collapse {
  margin: 78px 0 0 10px;
}

.workspace {
  display: flex;
  height: 832px;
}

.page {
  width: 814px;
  margin-left: 543px;
  border: solid #c6c6c6;
  border-width: 0 1px;
  background: #fff;
  color: #000;
  font-family: 'Liberation Serif', 'Times New Roman', serif;
  font-size: 21.33px;
  line-height: 26.5px;
  letter-spacing: 0;
  font-kerning: none;
  white-space: pre;
  overflow: hidden;
}

.machines {
  margin-left: 96px;
}

.machines text {
  font: 10.5px Roboto, sans-serif;
  letter-spacing: -0.1px;
  fill: #555;
}

.machines .muted {
  font-size: 9px;
  fill: #888;
}

.intro {
  margin: 12.5px 0 12px 95px;
}

.first-lines {
  height: 244px;
}

hr {
  margin: 0 0 4.3px;
  border: none;
  height: 1px;
  background: #b8b8b8;
}

.scrollbar {
  width: 17px;
  margin-left: auto;
  display: flex;
  flex-direction: column;
  align-items: center;
}

.arrow {
  background: #f3f3f3;
  border-radius: 0 0 6px 6px;
}

.arrow.top {
  border-radius: 8px 8px 0 0;
}

.thumb {
  width: 8px;
  height: 74px;
  margin-top: 301px;
  border-radius: 4px;
  background: #6b6b6b;
}

.arrow.bottom {
  margin-top: auto;
}

.status {
  display: flex;
  align-items: center;
  height: 22px;
  box-sizing: border-box;
  border-top: 1px solid #fafafa;
  background: #f3f3f3;
  padding-left: 8px;
  font-size: 11.5px;
  letter-spacing: -0.36px;
}

.st-page {
  width: 82px;
}

.st-words {
  width: 113px;
}

.st-label {
  margin-left: 22px;
}

.st-general {
  width: 201px;
  margin-left: 4px;
}

.st-pred {
  width: 122px;
}

.st-access {
  margin-left: 1px;
}

.st-right {
  display: flex;
  align-items: center;
  margin-left: auto;
  padding-right: 8px;
}

.st-focus {
  width: 55px;
  margin-left: 3px;
}

.view-print {
  display: flex;
  align-items: center;
  justify-content: center;
  width: 40px;
  height: 21px;
  margin: 0 13px 0 14px;
  background: #dedede;
}

.zoom-sign {
  position: relative;
  width: 8px;
  height: 1px;
  background: #333;
  margin-left: 19px;
}

.zoom-sign.plus {
  margin-left: 5px;
}

.zoom-sign.plus::after {
  content: '';
  position: absolute;
  left: 3.5px;
  top: -4px;
  width: 1px;
  height: 9px;
  background: #333;
}

.slider {
  display: flex;
  align-items: center;
  justify-content: center;
  width: 100px;
  height: 11px;
  margin-left: 5px;
  background: linear-gradient(#666, #666) 0 5px / 100% 1px no-repeat;
}

.slider i {
  width: 5px;
  height: 11px;
  background: #5c5c5c;
}

.st-zoom {
  width: 28px;
  margin-left: 13px;
}

.taskbar {
  display: flex;
  align-items: center;
  height: 48px;
  background: #202020;
  padding-left: 20px;
  color: #fff;
}

.weather {
  margin-top: -1px;
}

.weather-text {
  display: flex;
  flex-direction: column;
  width: 558px;
  margin-left: 6px;
  line-height: 16px;
  letter-spacing: -0.25px;
}

.cond {
  color: #c4c4c4;
}

.apps {
  display: flex;
}

.app-cell {
  position: relative;
  display: flex;
  align-items: center;
  justify-content: center;
  width: 44px;
  height: 48px;
}

.app-cell svg {
  position: relative;
}

.active-app {
  position: absolute;
  left: 3px;
  top: 4px;
  width: 35px;
  height: 38px;
  border: 1px solid #3a3a3a;
  border-radius: 4px;
  background: #2d2d2d;
  box-shadow: 4px 0 0 -1px #2b2b2b, 4px 0 0 0 #3a3a3a;
}

.running,
.idle-dot {
  position: absolute;
  bottom: 5px;
  width: 16px;
  height: 3px;
  border-radius: 2px;
  background: #60aeee;
}

.idle-dot {
  width: 6px;
  background: #9a9a9a;
}

.mail-badge {
  position: absolute;
  left: 23px;
  top: 7px;
  width: 16px;
  height: 16px;
  line-height: 16px;
  border-radius: 50%;
  background: #5fb0ef;
  color: #111;
  text-align: center;
}

.cmd-text {
  font: bold 6px 'Liberation Mono', monospace;
  fill: #fff;
}

.tray {
  display: flex;
  align-items: center;
  margin-left: auto;
  padding-right: 18px;
}

.wifi {
  margin-left: 18px;
}

.sound {
  margin-left: 8px;
}

.clock {
  display: flex;
  flex-direction: column;
  align-items: flex-end;
  width: 67px;
  line-height: 16px;
  letter-spacing: -0.45px;
}
</style>
